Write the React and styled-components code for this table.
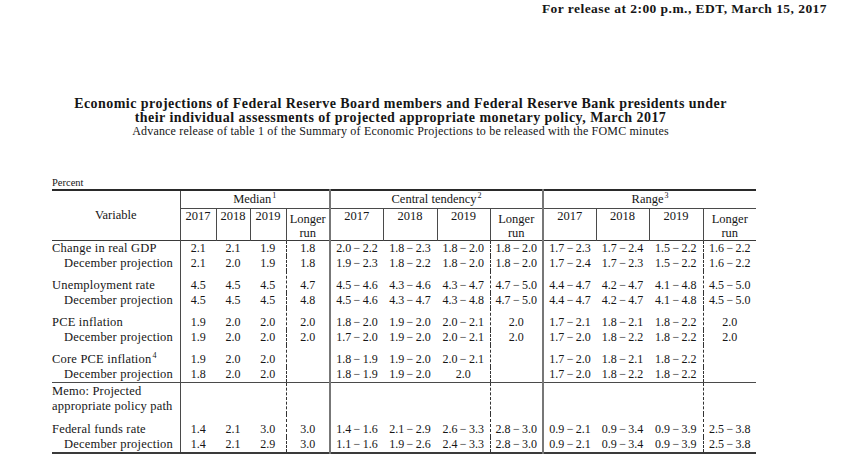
import React from 'react';
import styled, { createGlobalStyle } from 'styled-components';

const GlobalStyle = createGlobalStyle`
  html, body {
    margin: 0;
    padding: 0;
    background: #fff;
  }
  body {
    font-family: "Liberation Serif", "Times New Roman", serif;
    color: #161616;
    overflow: hidden;
  }
`;

const Page = styled.div`
  width: 852px;
  height: 459px;
  overflow: hidden;
  display: flex;
  flex-direction: column;
`;

const Release = styled.div`
  align-self: flex-end;
  margin: 2px 25px 0 0;
  font-size: 13.5px;
  font-weight: bold;
  line-height: 14px;
  letter-spacing: 0.45px;
`;

const TitleBlock = styled.div`
  width: 801px;
  margin-top: 81px;
  text-align: center;
`;

const Title = styled.div`
  font-size: 14px;
  font-weight: bold;
  line-height: 14px;
  letter-spacing: 0.45px;
`;

const Subtitle = styled.div`
  font-size: 12px;
  line-height: 13px;
  letter-spacing: 0.18px;
`;

const Unit = styled.div`
  margin: 38px 0 0 52px;
  font-size: 10.5px;
  line-height: 13px;
`;

const Table = styled.table`
  margin-left: 52px;
  width: 704px;
  border-collapse: collapse;
  table-layout: fixed;
  font-size: 12px;
  border-top: 2px solid #2a2a2a;
  border-bottom: 2px solid #3a3a3a;
`;

const edges = {
  none: 'none',
  group: '1.5px solid #4a4a4a',
  major: '2px solid #777',
  minor: '1px solid #4a4a4a',
  dash: '1px dashed #333',
};

const Head = styled.th`
  font-weight: normal;
  padding: 0;
  text-align: center;
  border-left: ${p => edges[p.$edge || 'none']};
  vertical-align: ${p => p.$valign || 'top'};
  line-height: 14px;
  padding-top: ${p => p.$pt || 0}px;
  border-bottom: ${p => (p.$under ? '1px solid #4a4a4a' : 'none')};
  font-size: 12.5px;
`;

const Sup = styled.sup`
  font-size: 8px;
  vertical-align: 5px;
  line-height: 0;
  margin-left: 1px;
`;

const HeadRow = styled.tr`
  height: ${p => p.$h}px;
  border-bottom: ${p => (p.$rule ? '1.5px solid #3a3a3a' : 'none')};
`;

const Row = styled.tr`
  border-top: ${p => (p.$rule ? '1.5px solid #4a4a4a' : 'none')};
`;

const Label = styled.td`
  padding: ${p => p.$gap || 0}px 0 0 ${p => (p.$sub ? 12 : 0)}px;
  font-size: 12.5px;
  letter-spacing: 0.2px;
  line-height: 15px;
  white-space: nowrap;
  vertical-align: bottom;
`;

const Value = styled.td`
  padding: ${p => p.$gap || 0}px 0 0 0;
  line-height: 15px;
  text-align: center;
  white-space: nowrap;
  vertical-align: bottom;
  border-left: ${p => edges[p.$edge || 'none']};
`;

const Note = styled.div`
  margin: 4px 0 0 72px;
  font-size: 11px;
  line-height: 13px;
  white-space: nowrap;
`;

const bodyEdges = ['group', 'none', 'none', 'dash', 'major', 'none', 'none', 'dash', 'major', 'none', 'none', 'dash'];
const headEdges = ['group', 'minor', 'minor', 'minor', 'major', 'minor', 'minor', 'minor', 'major', 'minor', 'minor', 'minor'];

const fmt = v => v.replace('-', '\u2009\u2212\u2009');

const groups = [
  {
    rows: [
      ['Change in real GDP', ['2.1', '2.1', '1.9', '1.8', '2.0-2.2', '1.8-2.3', '1.8-2.0', '1.8-2.0', '1.7-2.3', '1.7-2.4', '1.5-2.2', '1.6-2.2']],
      ['December projection', ['2.1', '2.0', '1.9', '1.8', '1.9-2.3', '1.8-2.2', '1.8-2.0', '1.8-2.0', '1.7-2.4', '1.7-2.3', '1.5-2.2', '1.6-2.2']],
    ],
  },
  {
    rows: [
      ['Unemployment rate', ['4.5', '4.5', '4.5', '4.7', '4.5-4.6', '4.3-4.6', '4.3-4.7', '4.7-5.0', '4.4-4.7', '4.2-4.7', '4.1-4.8', '4.5-5.0']],
      ['December projection', ['4.5', '4.5', '4.5', '4.8', '4.5-4.6', '4.3-4.7', '4.3-4.8', '4.7-5.0', '4.4-4.7', '4.2-4.7', '4.1-4.8', '4.5-5.0']],
    ],
  },
  {
    rows: [
      ['PCE inflation', ['1.9', '2.0', '2.0', '2.0', '1.8-2.0', '1.9-2.0', '2.0-2.1', '2.0', '1.7-2.1', '1.8-2.1', '1.8-2.2', '2.0']],
      ['December projection', ['1.9', '2.0', '2.0', '2.0', '1.7-2.0', '1.9-2.0', '2.0-2.1', '2.0', '1.7-2.0', '1.8-2.2', '1.8-2.2', '2.0']],
    ],
  },
  {
    rows: [
      ['Core PCE inflation', ['1.9', '2.0', '2.0', '', '1.8-1.9', '1.9-2.0', '2.0-2.1', '', '1.7-2.0', '1.8-2.1', '1.8-2.2', '']],
      ['December projection', ['1.8', '2.0', '2.0', '', '1.8-1.9', '1.9-2.0', '2.0', '', '1.7-2.0', '1.8-2.2', '1.8-2.2', '']],
    ],
    sup: 4,
  },
];

const funds = [
  ['Federal funds rate', ['1.4', '2.1', '3.0', '3.0', '1.4-1.6', '2.1-2.9', '2.6-3.3', '2.8-3.0', '0.9-2.1', '0.9-3.4', '0.9-3.9', '2.5-3.8']],
  ['December projection', ['1.4', '2.1', '2.9', '3.0', '1.1-1.6', '1.9-2.6', '2.4-3.3', '2.8-3.0', '0.9-2.1', '0.9-3.4', '0.9-3.9', '2.5-3.8']],
];

const widths = [128, 36, 34, 36, 44, 53, 54, 53, 53, 53, 53, 54, 53];
const years = ['2017', '2018', '2019'];

function DataRow({ label, values, sub, gap, sup }) {
  return (
    <Row>
      <Label $sub={sub} $gap={gap}>
        {label}
        {sup && <Sup>{sup}</Sup>}
      </Label>
      {values.map((v, i) => (
        <Value key={i} $edge={bodyEdges[i]} $gap={gap}>
          {fmt(v)}
        </Value>
      ))}
    </Row>
  );
}

function YearHeads() {
  const cells = [];
  for (let g = 0; g < 3; g++) {
    years.forEach((y, k) => {
      cells.push(
        <Head key={`${g}-${y}`} $edge={headEdges[g * 4 + k]}>
          {y}
        </Head>
      );
    });
    cells.push(
      <Head key={`${g}-lr`} $edge={headEdges[g * 4 + 3]} $pt={3}>
        Longer
        <br />
        run
      </Head>
    );
  }
  return cells;
}

export default function App() {
  return (
    <Page>
      <GlobalStyle />
      <Release>For release at 2:00 p.m., EDT, March 15, 2017</Release>
      <TitleBlock>
        <Title>Economic projections of Federal Reserve Board members and Federal Reserve Bank presidents under</Title>
        <Title>their individual assessments of projected appropriate monetary policy, March 2017</Title>
        <Subtitle>Advance release of table 1 of the Summary of Economic Projections to be released with the FOMC minutes</Subtitle>
      </TitleBlock>
      <Unit>Percent</Unit>
      <Table>
        <colgroup>
          {widths.map((w, i) => (
            <col key={i} style={{ width: w }} />
          ))}
        </colgroup>
        <thead>
          <HeadRow $h={18}>
            <Head rowSpan={2} $valign="middle">Variable</Head>
            <Head colSpan={4} $edge="group" $under $pt={1}>
              Median<Sup>1</Sup>
            </Head>
            <Head colSpan={4} $edge="major" $under $pt={1}>
              Central tendency<Sup>2</Sup>
            </Head>
            <Head colSpan={4} $edge="major" $under $pt={1}>
              Range<Sup>3</Sup>
            </Head>
          </HeadRow>
          <HeadRow $h={32} $rule>
            <YearHeads />
          </HeadRow>
        </thead>
        <tbody>
          {groups.map((g, gi) =>
            g.rows.map(([label, values], ri) => (
              <DataRow
                key={`${gi}-${ri}`}
                label={label}
                values={values}
                sub={ri === 1}
                gap={ri === 0 && gi > 0 ? 7 : 0}
                sup={ri === 0 ? g.sup : undefined}
              />
            ))
          )}
          <Row $rule>
            <Label $gap={1}>
              Memo: Projected
              <br />
              appropriate policy path
            </Label>
            {bodyEdges.map((e, i) => (
              <Value key={i} $edge={e} />
            ))}
          </Row>
          {funds.map(([label, values], ri) => (
            <DataRow key={label + ri} label={label} values={values} sub={ri === 1} gap={ri === 0 ? 8 : 0} />
          ))}
        </tbody>
      </Table>
      <Note>
        Note: Projections of change in real gross domestic product (GDP) and projections for both measures of inflation are percent changes from the fourth quarter
      </Note>
    </Page>
  );
}
